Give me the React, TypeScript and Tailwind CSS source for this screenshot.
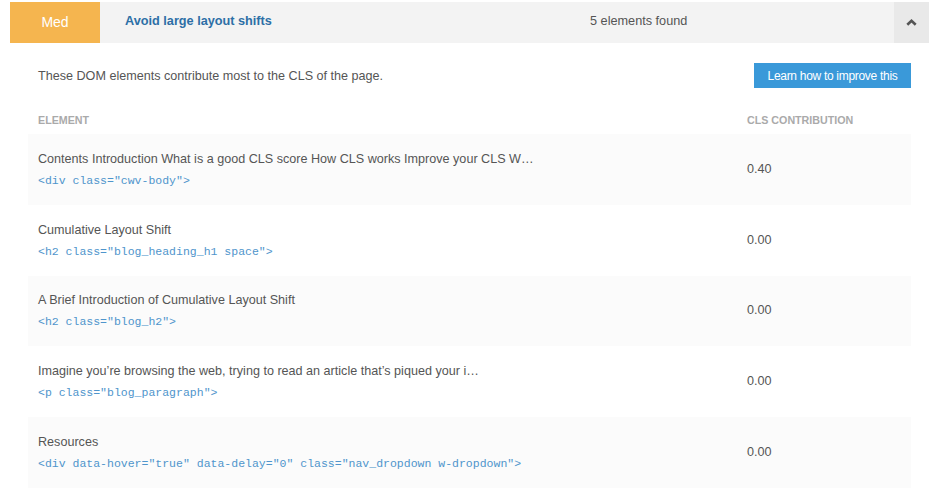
import React from 'react';

type Item = { label: string; code: string; value: string };

const ITEMS: Item[] = [
  {
    label: 'Contents Introduction What is a good CLS score How CLS works Improve your CLS W…',
    code: '<div class="cwv-body">',
    value: '0.40',
  },
  { label: 'Cumulative Layout Shift', code: '<h2 class="blog_heading_h1 space">', value: '0.00' },
  { label: 'A Brief Introduction of Cumulative Layout Shift', code: '<h2 class="blog_h2">', value: '0.00' },
  {
    label: 'Imagine you’re browsing the web, trying to read an article that’s piqued your i…',
    code: '<p class="blog_paragraph">',
    value: '0.00',
  },
  {
    label: 'Resources',
    code: '<div data-hover="true" data-delay="0" class="nav_dropdown w-dropdown">',
    value: '0.00',
  },
];

const App: React.FC = () => {
  return (
    <div className="w-[936px] h-[501px] bg-white pt-[2px] font-['Liberation_Sans',Arial,sans-serif] text-[#555]">
      {/* Audit header */}
      <div className="ml-[10px] mr-[7px] h-[41px] flex items-stretch bg-[#f3f3f3]">
        <div className="w-[90px] bg-[#f5b54f] flex items-center justify-center text-white text-[14px]">Med</div>
        <div className="flex-1 flex items-center pl-[25px] pb-[1px]">
          <span className="w-[465px] text-[12.7px] font-bold text-[#2d6fa6]">Avoid large layout shifts</span>
          <span className="text-[12.7px] text-[#555]">5 elements found</span>
        </div>
        <div className="w-[35px] bg-[#e9e9e9] flex items-center justify-center">
          <svg width="11" height="7" viewBox="0 0 11 7">
            <path d="M1.3 5.8 L5.5 1.8 L9.7 5.8" fill="none" stroke="#555" strokeWidth="2.6" />
          </svg>
        </div>
      </div>

      {/* Body */}
      <div className="ml-[28px] w-[883px]">
        <div className="flex items-center justify-between pl-[10px] mt-[20px] h-[25px]">
          <p className="text-[12.6px] text-[#555] pt-[1px]">These DOM elements contribute most to the CLS of the page.</p>
          <button className="h-[25px] w-[157px] bg-[#3a99d9] text-white text-[12px] tracking-[-0.3px]">
            Learn how to improve this
          </button>
        </div>

        <div className="flex items-end h-[46px] pb-[6px] pl-[10px] text-[10.7px] font-bold text-[#aaa] uppercase">
          <span className="w-[709px]">Element</span>
          <span>CLS Contribution</span>
        </div>

        {ITEMS.map((item, i) => (
          <div
            key={i}
            className={`h-[70.75px] flex items-center pl-[10px] ${i % 2 === 0 ? 'bg-[#fbfbfb]' : 'bg-white'}`}
          >
            <div className="w-[709px] flex flex-col gap-[6px] pt-[1px]">
              <span className="text-[12.6px] text-[#555] leading-[16px]">{item.label}</span>
              <span className="font-['Liberation_Mono',monospace] text-[11.5px] leading-[16px] text-[#4f95cc]">
                {item.code}
              </span>
            </div>
            <span className="text-[12.6px] text-[#555]">{item.value}</span>
          </div>
        ))}
      </div>
    </div>
  );
};

export default App;
